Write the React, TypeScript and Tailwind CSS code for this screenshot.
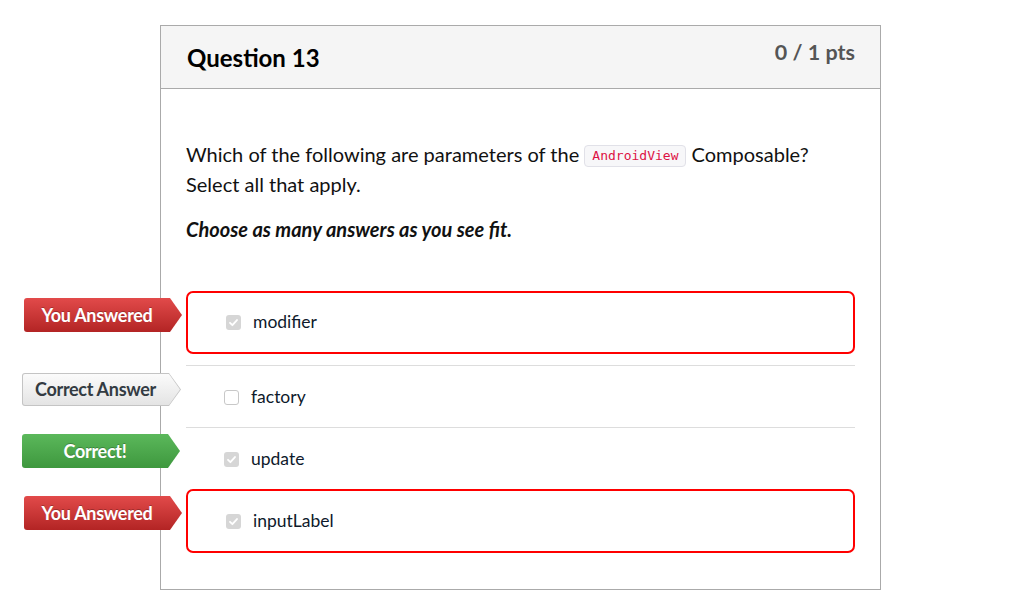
type Flag = "wrong" | "missed" | "right" | null;

const answers: { text: string; checked: boolean; boxed: boolean; flag: Flag }[] = [
  { text: "modifier", checked: true, boxed: true, flag: "wrong" },
  { text: "factory", checked: false, boxed: false, flag: "missed" },
  { text: "update", checked: true, boxed: false, flag: "right" },
  { text: "inputLabel", checked: true, boxed: true, flag: "wrong" },
];

const arrow = "[clip-path:polygon(0_0,calc(100%-12px)_0,100%_50%,calc(100%-12px)_100%,0_100%)]";

function Tag({ flag }: { flag: Flag }) {
  if (flag === "wrong") {
    return (
      <div className={`absolute left-[-164px] top-[5px] w-[158px] h-[34px] rounded-l-[3px] bg-gradient-to-b from-[#e24a4a] to-[#b32424] ${arrow} flex items-center pr-[12px]`}>
        <span className="w-full text-center text-[18px] font-bold text-white tracking-[-0.3px] [text-shadow:0_-1px_0_rgba(0,0,0,0.25)]">You Answered</span>
      </div>
    );
  }
  if (flag === "right") {
    return (
      <div className={`absolute left-[-164px] top-[6px] w-[158px] h-[34px] rounded-l-[3px] bg-gradient-to-b from-[#5bb85b] to-[#3e983e] ${arrow} flex items-center pr-[12px]`}>
        <span className="w-full text-center text-[18px] font-bold text-white tracking-[-0.3px] [text-shadow:0_-1px_0_rgba(0,0,0,0.25)]">Correct!</span>
      </div>
    );
  }
  if (flag === "missed") {
    return (
      <div className={`absolute left-[-164px] top-[7px] w-[159px] h-[33px] rounded-l-[3px] bg-[#c4c4c4] ${arrow} p-px`}>
        <div className={`w-full h-full rounded-l-[2px] bg-gradient-to-b from-[#fbfbfb] to-[#e4e4e4] [clip-path:polygon(0_0,calc(100%-11px)_0,100%_50%,calc(100%-11px)_100%,0_100%)] flex items-center pr-[12px]`}>
          <span className="w-full text-center text-[18px] font-bold text-[#333b42] tracking-[-0.3px]">Correct Answer</span>
        </div>
      </div>
    );
  }
  return null;
}

function Box({ checked }: { checked: boolean }) {
  return checked ? (
    <span className="w-[15px] h-[15px] rounded-[3px] bg-[#d6d6d6] flex items-center justify-center">
      <svg width="11" height="11" viewBox="0 0 12 12" fill="none">
        <path d="M2.2 6.3l2.6 2.6 5-5.6" stroke="#fff" strokeWidth="2" strokeLinecap="round" strokeLinejoin="round" />
      </svg>
    </span>
  ) : (
    <span className="w-[15px] h-[15px] rounded-[3px] border border-[#c8c8c8] bg-white" />
  );
}

export default function App() {
  return (
    <div className="w-[1021px] h-[596px] bg-white font-['Lato','Noto_Sans',sans-serif] text-[#2d3b45] pt-[25px] pl-[160px]">
      <div className="w-[721px] h-[565px] border border-[#aaaaaa]">
        <div className="h-[63px] bg-[#f5f5f5] border-b border-[#aaaaaa] flex justify-between pl-[26px] pr-[25px]">
          <h2 className="pt-[16px] text-[24px] font-bold text-black leading-[32px]">Question 13</h2>
          <div className="pt-[12px] text-[21.5px] font-bold text-[#555] leading-[28px]">0 / 1 pts</div>
        </div>
        <div className="px-[25px]">
          <div className="pt-[50px] text-[20px] leading-[30px] text-[#111]">
            <p>
              Which of the following are parameters of the{" "}
              <code className="inline-block align-[2px] px-[7px] leading-[20px] text-[13px] font-['DejaVu_Sans_Mono',monospace] text-[#dd1144] bg-[#f7f7f9] border border-[#e1e1e8] rounded-[4px]">
                AndroidView
              </code>{" "}
              Composable? Select all that apply.
            </p>
            <p className="mt-[15px] font-bold italic">Choose as many answers as you see fit.</p>
          </div>
          <div className="mt-[47px] text-[17.5px]">
            {answers.map((a, i) => (
              <div key={i}>
                {i === 1 && <div className="h-[11px]" />}
                <div
                  className={
                    a.boxed
                      ? `relative flex items-center gap-[12px] pl-[38px] rounded-[7px] border-2 border-[#ff0000] ${i === 0 ? "h-[63px]" : "h-[64px]"}`
                      : "relative flex items-center gap-[12px] pl-[38px] pt-px h-[62px] border-t border-[#dddddd]"
                  }
                >
                  <Tag flag={a.flag} />
                  <Box checked={a.checked} />
                  <span className="text-[#0e1a2b]">{a.text}</span>
                </div>
              </div>
            ))}
          </div>
        </div>
      </div>
    </div>
  );
}
